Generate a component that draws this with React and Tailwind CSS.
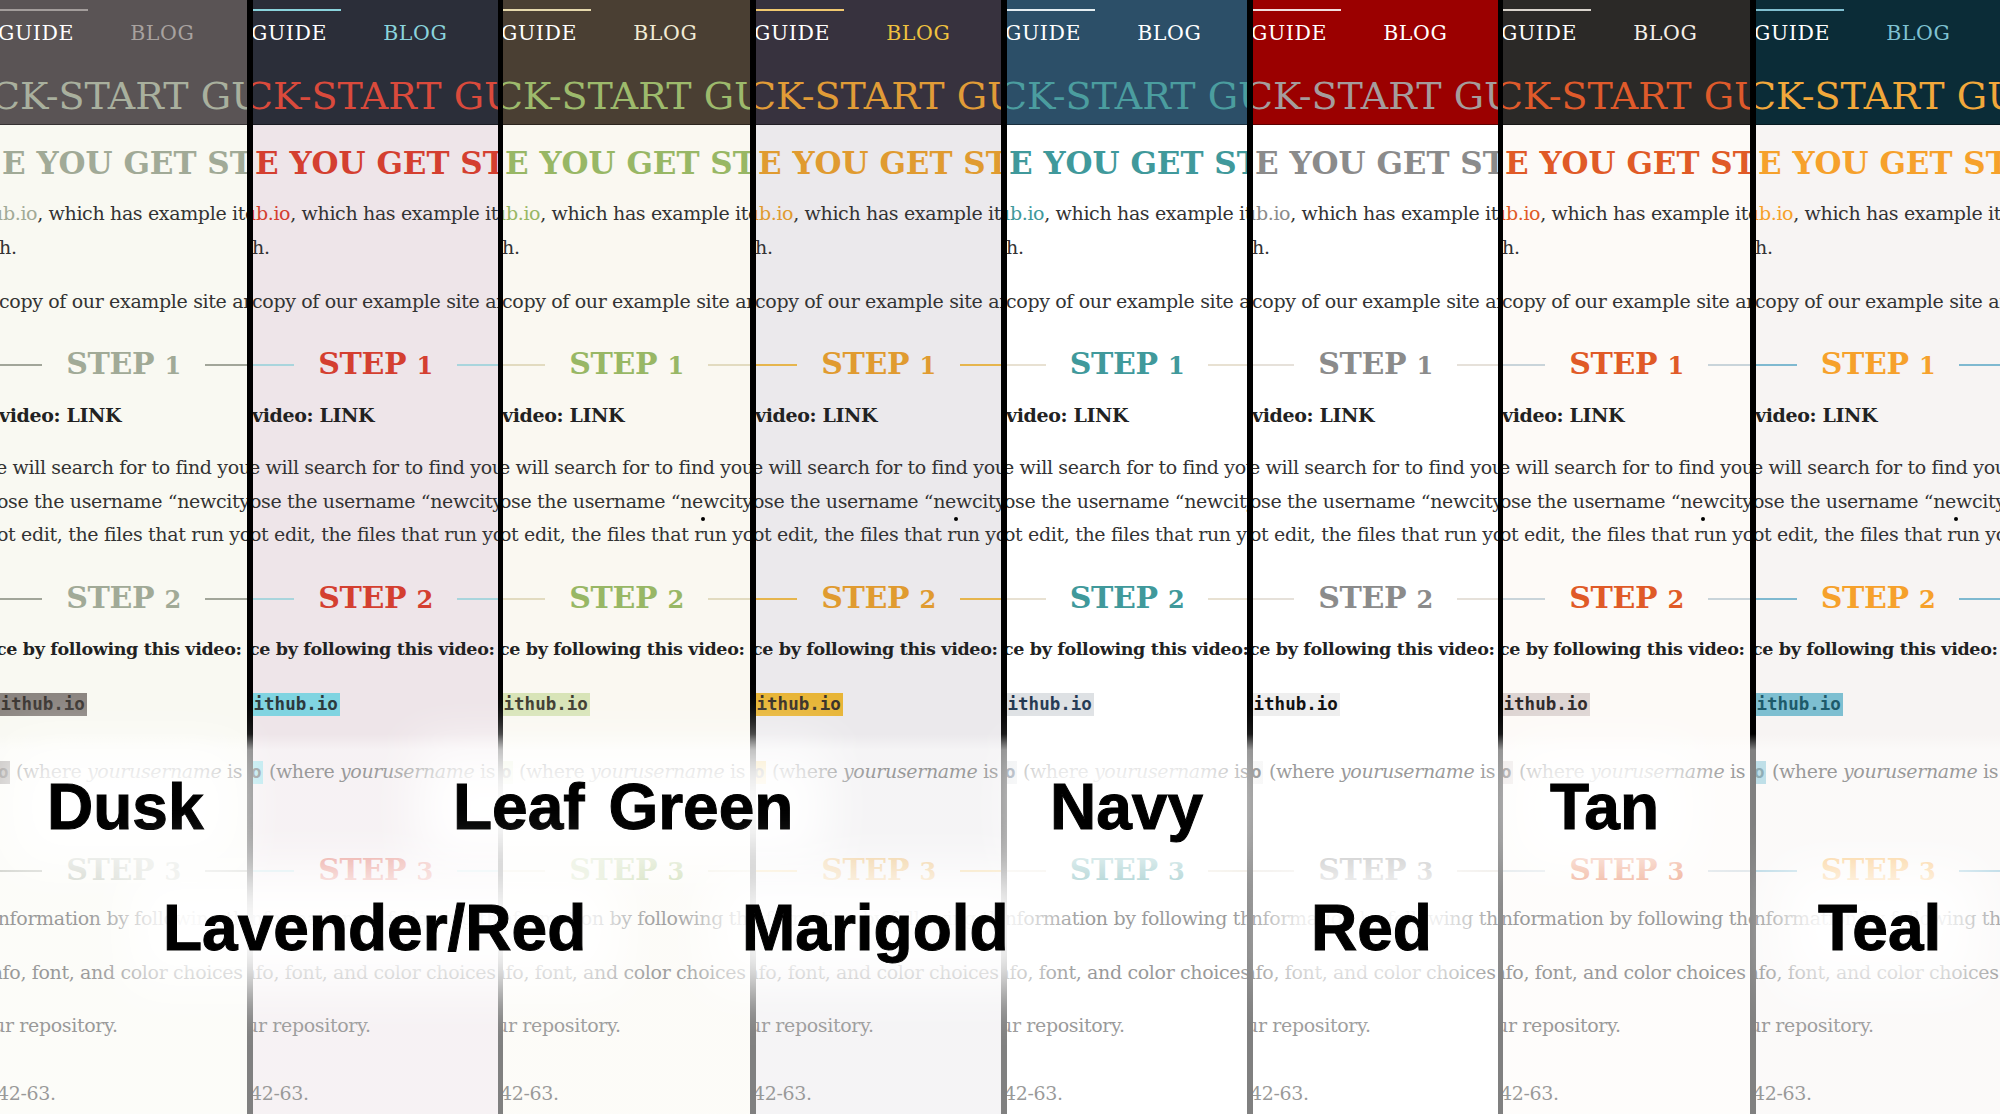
import React from 'react'

const serif = "font-['DejaVu_Serif',serif]"

const themes = [
  { key: 'dusk', w: 'w-[247px]', bg: 'bg-[#f9f9f2]', header: 'bg-[#5a5455]', title: 'text-[#a9b09e]', accent: 'text-[#a1aa97]', blog: 'text-[#a8a29f]', underline: 'bg-[#a39d9b]', line: 'bg-[#a2a69a]', chip: 'bg-[#8b8580] text-[#3b3632]' },
  { key: 'lavender', w: 'w-[245px]', bg: 'bg-[#eee5e9]', header: 'bg-[#2b2e39]', title: 'text-[#da4a3c]', accent: 'text-[#d43f30]', blog: 'text-[#8ad4dd]', underline: 'bg-[#8ad4dd]', line: 'bg-[#a9d5dd]', chip: 'bg-[#80d4e1] text-[#2d3a3d]' },
  { key: 'leaf', w: 'w-[247px]', bg: 'bg-[#faf8f1]', header: 'bg-[#4a3f33]', title: 'text-[#9dba6c]', accent: 'text-[#98b765]', blog: 'text-[#f1ebd5]', underline: 'bg-[#e6d8ac]', line: 'bg-[#e2dbc0]', chip: 'bg-[#d8e4b7] text-[#3c3a2e]', dot: true },
  { key: 'marigold', w: 'w-[245px]', bg: 'bg-[#ebe9ec]', header: 'bg-[#37323e]', title: 'text-[#e19c37]', accent: 'text-[#e09b30]', blog: 'text-[#efc23f]', underline: 'bg-[#f0c86f]', line: 'bg-[#e6b54d]', chip: 'bg-[#e8b536] text-[#3a3128]', dot: true },
  { key: 'navy', w: 'w-[240px]', bg: 'bg-white', header: 'bg-[#2c4f68]', title: 'text-[#4b9d9f]', accent: 'text-[#40999b]', blog: 'text-white', underline: 'bg-[#e5eef2]', line: 'bg-[#e8e1d2]', chip: 'bg-[#dee1e4] text-[#1e3550]' },
  { key: 'red', w: 'w-[245px]', bg: 'bg-white', header: 'bg-[#9b0000]', title: 'text-[#a59c9c]', accent: 'text-[#8b8b8b]', blog: 'text-white', underline: 'bg-[#f2dede]', line: 'bg-[#e6e1da]', chip: 'bg-[#eeeeee] text-[#111111]' },
  { key: 'tan', w: 'w-[247px]', bg: 'bg-[#fdfaf7]', header: 'bg-[#2b2927]', title: 'text-[#df5a2b]', accent: 'text-[#e05a27]', blog: 'text-[#f5efe8]', underline: 'bg-[#d9d3cc]', line: 'bg-[#c9d4da]', chip: 'bg-[#ddd4d2] text-[#2a2424]', dot: true },
  { key: 'teal', w: 'w-[244px]', bg: 'bg-[#f7f4f3]', header: 'bg-[#0b2c37]', title: 'text-[#f2a83b]', accent: 'text-[#f6a12b]', blog: 'text-[#7fc2d2]', underline: 'bg-[#7fbfd0]', line: 'bg-[#7fb9d0]', chip: 'bg-[#7ebfd1] text-[#1d5a6a]', dot: true },
]

const seps = ['w-[6px]', 'w-[5px]', 'w-[6px]', 'w-[6px]', 'w-[6px]', 'w-[5px]', 'w-[6px]']

const labels = [
  { text: 'Dusk', pos: 'left-[47px] top-[775px]' },
  { text: 'Leaf Green', pos: 'left-[453px] top-[775px]' },
  { text: 'Navy', pos: 'left-[1050px] top-[775px]' },
  { text: 'Tan', pos: 'left-[1550px] top-[775px]' },
  { text: 'Lavender/Red', pos: 'left-[163px] top-[896px]' },
  { text: 'Marigold', pos: 'left-[742px] top-[896px]' },
  { text: 'Red', pos: 'left-[1311px] top-[896px]' },
  { text: 'Teal', pos: 'left-[1818px] top-[896px]' },
]

const Line = ({ className = '', children }) => (
  <div className={`h-[33.5px] leading-[33.5px] whitespace-nowrap ${className}`}>{children}</div>
)

const Step = ({ t, n, className }) => (
  <div className={`flex h-[44px] items-center ${className}`}>
    <div className={`h-[2px] flex-1 ${t.line}`} />
    <div className={`mx-[24px] shrink-0 whitespace-nowrap text-[30px] font-bold leading-[44px] ${t.accent}`}>
      STEP <span className="text-[24px]">{n}</span>
    </div>
    <div className={`h-[2px] flex-1 ${t.line}`} />
  </div>
)

const Column = ({ t }) => (
  <div className={`relative h-[1114px] shrink-0 overflow-hidden ${t.w} ${t.bg} ${serif} text-[19px] tracking-[-0.35px] text-[#333333]`}>
    <header className={`h-[125px] border-b border-black/40 pt-[9px] ${t.header}`}>
      <div className={`h-[2px] w-[88px] ${t.underline}`} />
      <div className="flex h-[44px] items-center whitespace-nowrap text-[20.5px] tracking-[0.6px]">
        <span className="ml-[-2px] text-white">GUIDE</span>
        <span className={`ml-[56px] ${t.blog}`}>BLOG</span>
      </div>
      <div className={`ml-[-9px] mt-[16px] h-[50px] whitespace-nowrap text-[38px] leading-[50px] tracking-normal ${t.title}`}>
        CK-START GUIDE
      </div>
    </header>

    <div className={`ml-[2px] mt-[18px] h-[40px] whitespace-nowrap text-[31px] font-bold leading-[40px] tracking-normal ${t.accent}`}>
      E YOU GET STARTED
    </div>

    <Line className="mt-[14px]">
      <span className={`ml-[-9px] ${t.accent}`}>ub.io</span>, which has example items for you
    </Line>
    <Line className="ml-[-1px]">h.</Line>
    <Line className="ml-[-1px] mt-[21px]">copy of our example site and make it your own.</Line>

    <Step t={t} n="1" className="mt-[24.5px]" />

    <Line className="ml-[-1px] mt-[12px] text-[19px] font-bold text-[#222222]">video: LINK</Line>

    <Line className="ml-[-4px] mt-[18.5px]">e will search for to find your site.</Line>
    <Line className="ml-[-3px]">ose the username “newcityguide”, your</Line>
    <Line className="ml-[-3px]">ot edit, the files that run your site.</Line>

    <Step t={t} n="2" className="mt-[25.5px]" />

    <Line className="ml-[-4px] mt-[12px] text-[17.5px] font-bold text-[#222222]">ce by following this video:</Line>

    <Line className="mt-[20.5px] tracking-normal">
      <span className={`ml-[-12px] inline-block px-[2px] font-['DejaVu_Sans_Mono',monospace] text-[17.5px] font-bold leading-[23px] ${t.chip}`}>
        github.io
      </span>
    </Line>

    <Line className="mt-[34.5px]">
      <span className={`ml-[-2px] inline-block pr-[2px] font-['DejaVu_Sans_Mono',monospace] text-[17.5px] font-bold leading-[23px] ${t.chip}`}>
        o
      </span>{' '}
      (where <em>yourusername</em> is the name
    </Line>

    <Step t={t} n="3" className="mt-[60.5px]" />

    <Line className="ml-[-8px] mt-[9px]">information by following the steps</Line>
    <Line className="ml-[-15px] mt-[20.5px]">info, font, and color choices to</Line>
    <Line className="ml-[-7px] mt-[19.5px]">ur repository.</Line>
    <Line className="ml-[-3px] mt-[34.5px]">42-63.</Line>

    {t.dot && <div className="absolute left-[198px] top-[517px] h-[4px] w-[4px] rounded-full bg-black" />}
  </div>
)

export default function App() {
  return (
    <div className="relative flex h-[1114px] w-[2000px] overflow-hidden bg-black">
      {themes.map((t, i) => (
        <React.Fragment key={t.key}>
          <Column t={t} />
          {i < seps.length && <div className={`h-full shrink-0 bg-black ${seps[i]}`} />}
        </React.Fragment>
      ))}

      <div className="absolute inset-x-0 top-[734px] bottom-0 bg-[linear-gradient(to_bottom,rgba(255,255,255,0)_0px,rgba(255,255,255,0.5)_16px)]" />

      {labels.map((l) => (
        <div key={l.text} className={`absolute ${l.pos}`}>
          <div className="absolute inset-x-[-36px] inset-y-[-28px] bg-white/95 blur-[26px]" />
          <div className="relative whitespace-nowrap font-['Liberation_Sans',Arial,sans-serif] text-[64px] font-bold leading-[64px] text-black [-webkit-text-stroke:1px_black] [word-spacing:6px]">
            {l.text}
          </div>
        </div>
      ))}
    </div>
  )
}
